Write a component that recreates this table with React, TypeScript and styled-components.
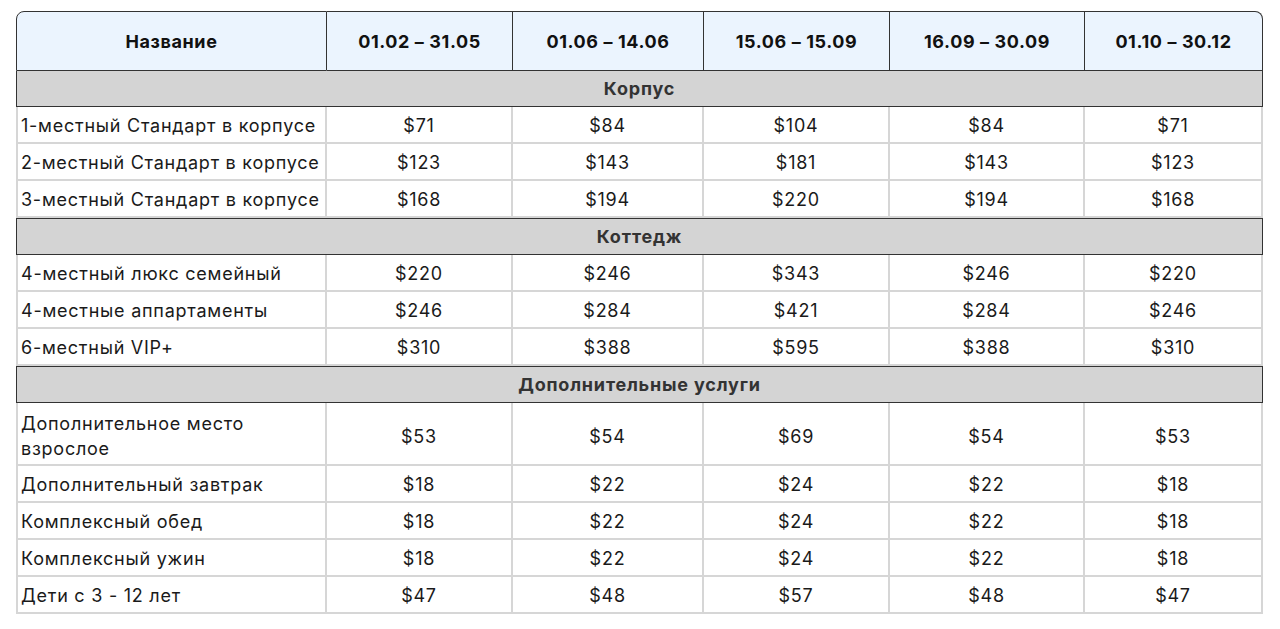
import React from "react";
import styled, { createGlobalStyle } from "styled-components";

const GlobalStyle = createGlobalStyle`
  html, body { margin: 0; padding: 0; background: #ffffff; }
  body { font-family: Inter, "Noto Sans", sans-serif; color: #1a1a1a; }
`;

const Page = styled.div`
  padding: 11px 16px 0 16px;
`;

const Table = styled.table`
  width: 1247px;
  border-collapse: separate;
  border-spacing: 0;
  table-layout: fixed;
  font-size: 18px;
  letter-spacing: 0.75px;
`;

const HeadCell = styled.th<{ $first?: boolean; $last?: boolean }>`
  height: 58px;
  padding: 0 6px;
  background: #ebf4fe;
  color: #111;
  font-weight: 700;
  font-size: 18px;
  letter-spacing: 0.6px;
  text-align: center;
  border-top: 1.5px solid #333;
  border-right: 1.5px solid #333;
  border-bottom: 1.5px solid #333;
  border-left: ${(p) => (p.$first ? "1.5px solid #333" : "none")};
  border-top-left-radius: ${(p) => (p.$first ? "8px" : "0")};
  border-top-right-radius: ${(p) => (p.$last ? "8px" : "0")};
`;

const SectionCell = styled.td<{ $afterHeader?: boolean }>`
  height: 35px;
  padding: 0;
  background: #d4d4d4;
  color: #333;
  font-weight: 700;
  font-size: 18px;
  letter-spacing: 0.8px;
  text-align: center;
  border-left: 1.5px solid #333;
  border-right: 1.5px solid #333;
  border-bottom: 1.5px solid #333;
  border-top: ${(p) => (p.$afterHeader ? "none" : "1.5px solid #333")};
`;

const DataCell = styled.td<{ $name?: boolean; $first?: boolean }>`
  height: 34px;
  padding: 1px 3px 0 3px;
  line-height: 25px;
  text-align: ${(p) => (p.$name ? "left" : "center")};
  color: #1a1a1a;
  border-right: 2px solid #d6d6d6;
  border-bottom: 2px solid #d6d6d6;
  border-left: ${(p) => (p.$first ? "2px solid #d6d6d6" : "none")};
`;

const TallCell = styled(DataCell)`
  height: 56px;
  padding-top: 5px;
  padding-bottom: 0;
`;

type Row = { name: string; prices: string[]; tall?: boolean };
type Section = { title: string; rows: Row[] };

const periods = ["01.02 – 31.05", "01.06 – 14.06", "15.06 – 15.09", "16.09 – 30.09", "01.10 – 30.12"];
const widths = [311, 186, 191, 186, 195, 178];

const sections: Section[] = [
  {
    title: "Корпус",
    rows: [
      { name: "1-местный Стандарт в корпусе", prices: ["$71", "$84", "$104", "$84", "$71"] },
      { name: "2-местный Стандарт в корпусе", prices: ["$123", "$143", "$181", "$143", "$123"] },
      { name: "3-местный Стандарт в корпусе", prices: ["$168", "$194", "$220", "$194", "$168"] },
    ],
  },
  {
    title: "Коттедж",
    rows: [
      { name: "4-местный люкс семейный", prices: ["$220", "$246", "$343", "$246", "$220"] },
      { name: "4-местные аппартаменты", prices: ["$246", "$284", "$421", "$284", "$246"] },
      { name: "6-местный VIP+", prices: ["$310", "$388", "$595", "$388", "$310"] },
    ],
  },
  {
    title: "Дополнительные услуги",
    rows: [
      { name: "Дополнительное место взрослое", prices: ["$53", "$54", "$69", "$54", "$53"], tall: true },
      { name: "Дополнительный завтрак", prices: ["$18", "$22", "$24", "$22", "$18"] },
      { name: "Комплексный обед", prices: ["$18", "$22", "$24", "$22", "$18"] },
      { name: "Комплексный ужин", prices: ["$18", "$22", "$24", "$22", "$18"] },
      { name: "Дети с 3 - 12 лет", prices: ["$47", "$48", "$57", "$48", "$47"] },
    ],
  },
];

export default function App() {
  return (
    <>
      <GlobalStyle />
      <Page>
        <Table>
          <colgroup>
            {widths.map((w, i) => (
              <col key={i} style={{ width: w }} />
            ))}
          </colgroup>
          <thead>
            <tr>
              <HeadCell $first>Название</HeadCell>
              {periods.map((p, i) => (
                <HeadCell key={p} $last={i === periods.length - 1}>
                  {p}
                </HeadCell>
              ))}
            </tr>
          </thead>
          <tbody>
            {sections.map((s, si) => (
              <React.Fragment key={s.title}>
                <tr>
                  <SectionCell colSpan={6} $afterHeader={si === 0}>
                    {s.title}
                  </SectionCell>
                </tr>
                {s.rows.map((r) => {
                  const Cell = r.tall ? TallCell : DataCell;
                  return (
                    <tr key={r.name}>
                      <Cell $name $first>
                        {r.name}
                      </Cell>
                      {r.prices.map((p, i) => (
                        <Cell key={i}>{p}</Cell>
                      ))}
                    </tr>
                  );
                })}
              </React.Fragment>
            ))}
          </tbody>
        </Table>
      </Page>
    </>
  );
}
